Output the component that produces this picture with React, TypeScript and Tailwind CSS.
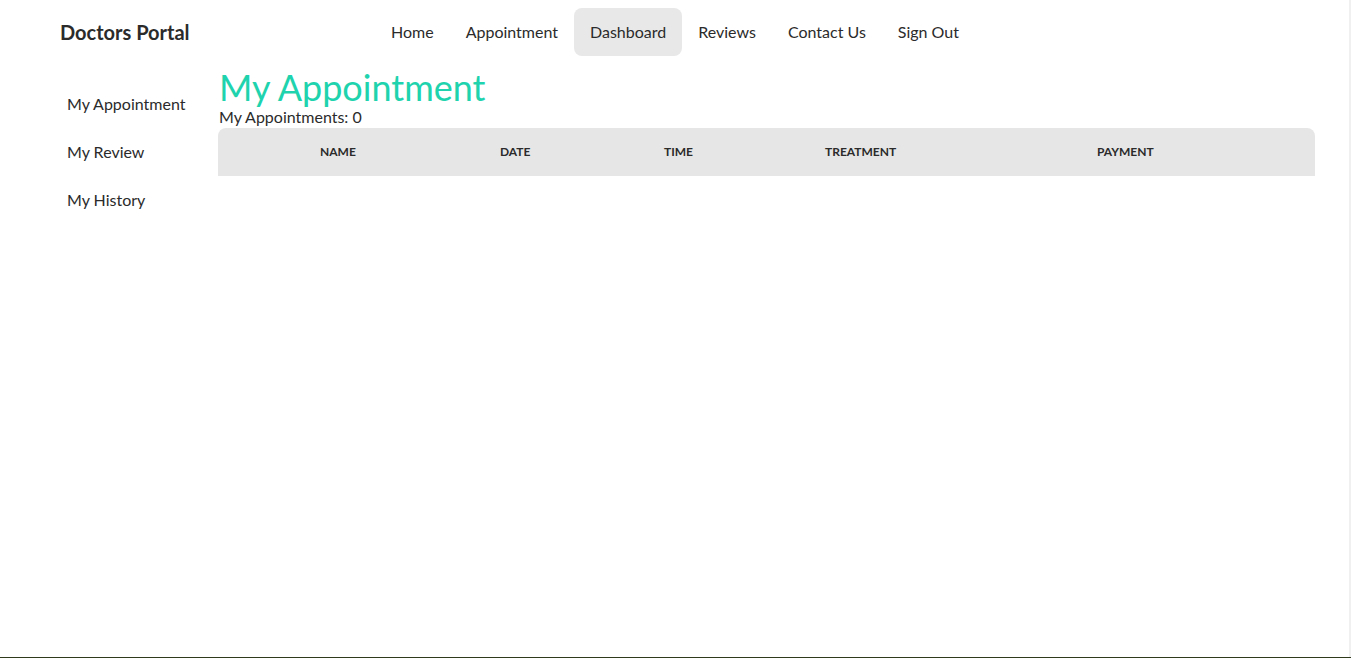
import React from "react";

const font = { fontFamily: 'Lato, "Open Sans", sans-serif' };

export default function App() {
  const nav = ["Home", "Appointment", "Dashboard", "Reviews", "Contact Us", "Sign Out"];
  return (
    <div className="flex h-[658px] w-[1351px] flex-col overflow-hidden bg-white text-[#2b2b2b]" style={font}>
      <div className="flex flex-1">
        <div className="flex flex-1 flex-col">
          <header className="relative flex h-16 items-center">
            <div className="pl-[60px] text-[20px] font-bold text-[#2b2b2b]">Doctors Portal</div>
            <nav className="absolute left-[375px] top-2 flex">
              {nav.map((n) => (
                <div
                  key={n}
                  className={`flex h-12 items-center rounded-lg px-4 text-[16px] ${n === "Dashboard" ? "bg-[#e8e8e8]" : ""}`}
                >
                  {n}
                </div>
              ))}
            </nav>
          </header>
          <div className="flex">
            <aside className="flex w-[218px] flex-col pl-[51px] pt-4">
              {["My Appointment", "My Review", "My History"].map((s) => (
                <div key={s} className="flex h-12 items-center px-4 text-[16px]">
                  {s}
                </div>
              ))}
            </aside>
            <main className="mr-[34px] flex-1">
              <h1 className="mt-[4px] h-[38px] pl-px text-[36px] leading-[38px] text-[#1ed3ad]">My Appointment</h1>
              <p className="pl-px text-[16px] leading-[22px]">My Appointments: 0</p>
              <div className="grid h-12 grid-cols-[86px_180px_164px_161px_272px_1fr] items-center rounded-t-lg bg-[#e6e6e6] text-[12px] font-bold uppercase text-[#2b2b2b]">
                <div />
                <div className="px-4">Name</div>
                <div className="px-4">Date</div>
                <div className="px-4">Time</div>
                <div className="px-4">Treatment</div>
                <div className="px-4">Payment</div>
              </div>
            </main>
          </div>
        </div>
        <div className="w-[2px] bg-[#f0f0f0]" />
      </div>
      <div className="h-px bg-[#2f3a1c]" />
    </div>
  );
}
